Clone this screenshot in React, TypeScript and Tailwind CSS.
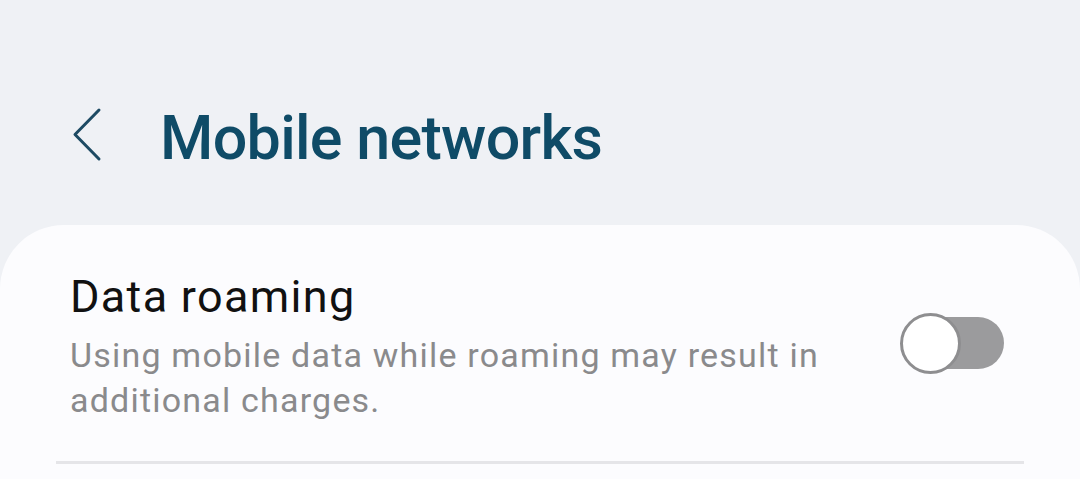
import React from 'react';

const Toggle: React.FC = () => (
  <div className="relative w-[104px] h-[62px] flex items-center">
    <div className="absolute left-[2px] right-0 h-[52px] rounded-full bg-[#9b9b9d]" />
    <div className="absolute left-0 w-[61px] h-[61px] rounded-full bg-white border-[3px] border-[#8e8e90]" />
  </div>
);

export default function App() {
  return (
    <div className="w-[1080px] h-[479px] overflow-hidden bg-[#eff1f5]" style={{ fontFamily: 'Roboto, "Noto Sans", sans-serif' }}>
      <div className="h-[225px] flex items-start pt-[106px]">
        <div className="w-[160px] flex pl-[72px]">
          <svg width="32" height="58" viewBox="0 0 32 58" fill="none">
            <path d="M27 4 L3 28.5 L27 53" stroke="#1d4a63" strokeWidth="3" strokeLinecap="round" strokeLinejoin="round" />
          </svg>
        </div>
        <h1 className="text-[61px] leading-[64px] font-medium text-[#0f4b67] tracking-[-0.7px]">Mobile networks</h1>
      </div>
      <div className="bg-[#fcfcfe] rounded-t-[64px] h-[254px] px-[56px] pt-[44px]">
        <div className="flex items-start">
          <div className="flex-1 pl-[14px]">
            <div className="text-[45px] leading-[56px] text-[#111] tracking-[1.3px]">Data roaming</div>
            <div className="text-[34px] leading-[45px] text-[#8a8a8c] mt-[8px] tracking-[1.2px]">
              Using mobile data while roaming may result in<br />additional charges.
            </div>
          </div>
          <div className="pr-[20px] mt-[43px]">
            <Toggle />
          </div>
        </div>
        <div className="mt-[38px] h-[3px] bg-[#e5e5e8]" />
      </div>
    </div>
  );
}
